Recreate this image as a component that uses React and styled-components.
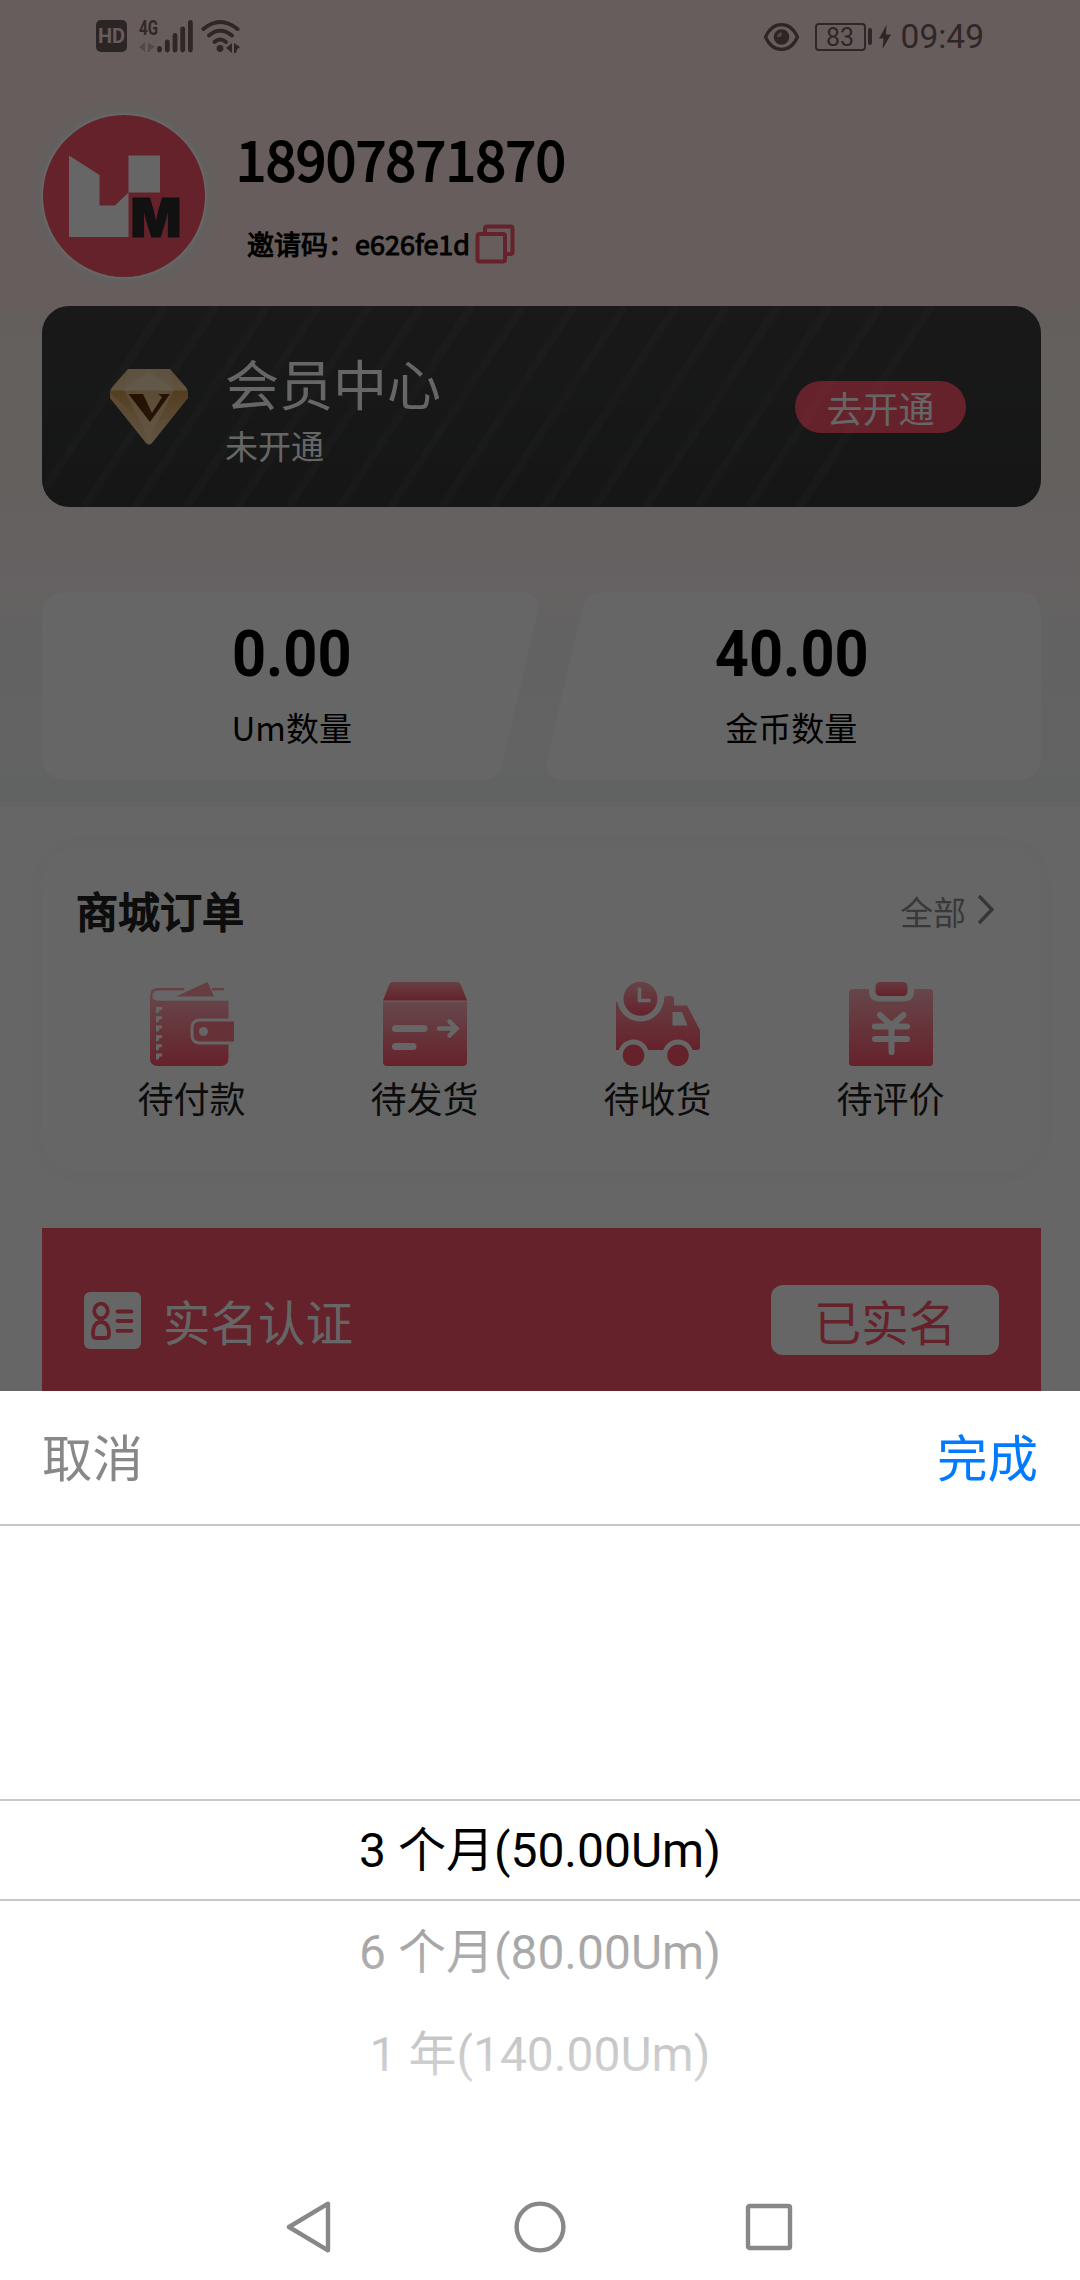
import styled, { createGlobalStyle } from "styled-components";

const RED = "#ff556c";

const orders = [
  { label: "待付款", Icon: WalletIcon },
  { label: "待发货", Icon: BoxIcon },
  { label: "待收货", Icon: TruckIcon },
  { label: "待评价", Icon: ClipboardIcon },
];

const stats = [
  { value: "0.00", label: "Um数量" },
  { value: "40.00", label: "金币数量" },
];

const periods = ["3 个月(50.00Um)", "6 个月(80.00Um)", "1 年(140.00Um)"];

const App = () => {
  return (
    <Screen>
      <GlobalStyle />
      <StatusBar />
      <Profile>
        <Avatar>
          <LogoIcon />
        </Avatar>
        <ProfileText>
          <Phone>18907871870</Phone>
          <Invite>
            <span>邀请码：e626fe1d</span>
            <CopyIcon />
          </Invite>
        </ProfileText>
      </Profile>

      <VipCard>
        <VipStripes />
        <DiamondIcon />
        <VipText>
          <VipTitle>会员中心</VipTitle>
          <VipState>未开通</VipState>
        </VipText>
        <VipButton>去开通</VipButton>
      </VipCard>

      <Stats>
        <StatsShape />
        {stats.map(({ value, label }) => (
          <Stat key={label}>
            <StatValue>{value}</StatValue>
            <StatLabel>{label}</StatLabel>
          </Stat>
        ))}
      </Stats>

      <OrdersWrap>
        <Orders>
          <OrdersHead>
            <OrdersTitle>商城订单</OrdersTitle>
            <OrdersAll>
              <span>全部</span>
              <svg width="20" height="32" viewBox="0 0 20 32">
                <path
                  d="M3 3L16 16.5L3 30"
                  fill="none"
                  stroke="#888"
                  strokeWidth="3.4"
                />
              </svg>
            </OrdersAll>
          </OrdersHead>
          <OrdersGrid>
            {orders.map(({ label, Icon }) => (
              <Order key={label}>
                <Icon />
                <span>{label}</span>
              </Order>
            ))}
          </OrdersGrid>
        </Orders>

        <Verify>
          <IdIcon />
          <VerifyTitle>实名认证</VerifyTitle>
          <VerifyBadge>已实名</VerifyBadge>
        </Verify>
      </OrdersWrap>

      <Mask />
      <Sheet>
        <SheetHead>
          <SheetAction $color="#888888">取消</SheetAction>
          <SheetAction $color="#007aff">完成</SheetAction>
        </SheetHead>
        <Picker>
          <PickerIndicator />
          {periods.map((period) => (
            <PickerItem key={period}>{period}</PickerItem>
          ))}
          <PickerFade />
        </Picker>
        <NavBar />
      </Sheet>
    </Screen>
  );
};

export default App;

function StatusBar() {
  return (
    <StatusRow>
      <HdBadge>HD</HdBadge>
      <Signal width="54" height="36" viewBox="0 0 54 36">
        <text
          x="0"
          y="17"
          fontSize="21"
          fontWeight="700"
          fontFamily="Roboto, sans-serif"
          textLength="19"
          lengthAdjust="spacingAndGlyphs"
          fill="#7a6664"
        >
          4G
        </text>
        <path d="M0 29L6 24V34zM9 24L16 29L11 32V34H9z" fill="#cbb9b7" />
        <g stroke="#746260" strokeWidth="4.8" strokeLinecap="round">
          <path d="M20.5 30.5V32M28.3 24V32M36 17.5V32M43.7 11V32M51.4 4.4V32" />
        </g>
      </Signal>
      <Wifi width="40" height="36" viewBox="0 0 40 36">
        <g
          fill="none"
          stroke="#746260"
          strokeWidth="4"
          strokeLinecap="round"
        >
          <path d="M2.5 11Q19 -3 36.5 11" />
          <path d="M8 17.5Q19 8 31 17.5" />
          <path d="M13.5 24Q19 19 25 24" />
        </g>
        <circle cx="19" cy="30.5" r="3.4" fill="#746260" />
        <path
          d="M25 30L31 25V35zM33 25L39 29L36 31.5L35 35H33z"
          fill="#746260"
        />
      </Wifi>
      <StatusRight>
        <svg width="37" height="30" viewBox="0 0 37 30">
          <path
            d="M2.5 15C10 -1.500 27 -1.500 34.500 15C27 31.500 10 31.500 2.500 15z"
            fill="none"
            stroke="#705f5d"
            strokeWidth="3.2"
          />
          <circle cx="18.500" cy="15" r="7.800" fill="#705f5d" />
          <path
            d="M14 15Q14.500 10.500 19 10.500L18 14.500z"
            fill="#fde8e5"
            opacity="0.7"
          />
        </svg>
        <Battery>83</Battery>
        <BatteryNub />
        <Bolt width="12" height="24" viewBox="0 0 12 24">
          <path d="M7.500 0L0 13.500H4.500L3.500 24L12 9.500H7z" fill="#705f5d" />
        </Bolt>
        <Clock>09:49</Clock>
      </StatusRight>
    </StatusRow>
  );
}

function LogoIcon() {
  return (
    <svg width="158" height="158" viewBox="0 0 158 158">
      <path
        d="M24 38.500L54.500 58V88.500H70L83.500 75.500V120H24z"
        fill="#fff"
      />
      <rect x="83.500" y="38.500" width="31.500" height="37" fill="#fff" />
      <text
        x="85.500"
        y="120"
        fontSize="53.500"
        fontWeight="900"
        fontFamily="Inter, sans-serif"
        textLength="51"
        lengthAdjust="spacingAndGlyphs"
        fill="#2b2b2b"
        stroke="#2b2b2b"
        strokeWidth="1"
      >
        M
      </text>
    </svg>
  );
}

function CopyIcon() {
  return (
    <svg width="40" height="40" viewBox="0 0 40 40">
      <g fill="none" stroke={RED} strokeWidth="4" strokeLinejoin="round">
        <path d="M10 8V4.500Q10 2.500 12 2.500H35.500Q37.500 2.500 37.500 4.500V28Q37.500 30 35.500 30H32" />
        <rect x="2.500" y="10" width="27.500" height="27.500" rx="2" />
      </g>
    </svg>
  );
}

function VipStripes() {
  const tops = Array.from({ length: 16 }, (_, i) => 123 + i * 51.1);
  return (
    <StripesSvg width="999" height="201" viewBox="0 0 999 201">
      {tops.map((x) => (
        <path
          key={x}
          d={`M${x} 0L${x - 132} 201`}
          stroke="#fff"
          strokeOpacity="0.04"
          strokeWidth="8"
        />
      ))}
    </StripesSvg>
  );
}

function DiamondIcon() {
  return (
    <svg width="78" height="76" viewBox="0 0 78 76">
      <defs>
        <linearGradient id="gem" x1="0" y1="0" x2="0" y2="1">
          <stop offset="0" stopColor="#e3bd84" />
          <stop offset="0.28" stopColor="#f0d0a2" />
          <stop offset="0.29" stopColor="#d29a50" />
          <stop offset="1" stopColor="#f5d6ae" />
        </linearGradient>
      </defs>
      <path
        d="M18 0H60L74 16Q78 20 78 24V29L42 74Q39 77 36 74L0 29V24Q0 20 4 16z"
        fill="url(#gem)"
      />
      <path d="M18 0H60L64 21H14z" fill="#f2d9b6" opacity="0.45" />
      <path d="M39 2L64 21H14z" fill="#fff3dc" opacity="0.35" />
      <path d="M14 21H64L39 70z" fill="#f7dcb4" opacity="0.5" />
      <path d="M0 24L18 40L39 76L0 29z" fill="#e9c189" opacity="0.7" />
      <path d="M18.500 25H33L42 44L52 28L48 25H60L40 53z" fill="#5c2d0a" />
    </svg>
  );
}

// two slanted cards sharing one backdrop
function StatsShape() {
  return (
    <StatsSvg width="999" height="188" viewBox="0 0 999 188">
      <path
        d="M26 0H478Q500 0 495 22L461 170Q456 188 438 188H26Q0 188 0 162V26Q0 0 26 0z"
        fill="#fff"
      />
      <path
        d="M562 0H973Q999 0 999 26V162Q999 188 973 188H524Q500 188 506 164L540 18Q545 0 562 0z"
        fill="#fff"
      />
    </StatsSvg>
  );
}

function RedFade({ id, from = "#ff9faa" }) {
  return (
    <linearGradient id={id} x1="0" y1="0" x2="0" y2="1">
      <stop offset="0" stopColor={from} />
      <stop offset="1" stopColor={RED} />
    </linearGradient>
  );
}

function WalletIcon() {
  return (
    <OrderSvg viewBox="0 0 84 84">
      <defs>
        <RedFade id="wallet" from="#ffb0b9" />
      </defs>
      <path
        d="M1.300 20V14Q1.300 7.300 8 7.300H34M62 7.300H74"
        fill="none"
        stroke="#ffa0ab"
        strokeWidth="2.400"
      />
      <path
        d="M26 14.500L57.500 0L64 14.500z"
        fill="#ff98a4"
      />
      <path
        d="M0 13Q3 18.700 9 18.700H78.500V76Q78.500 84 70.500 84H8Q0 84 0 76z"
        fill="url(#wallet)"
      />
      <path
        d="M84 38H50Q42 38 42 46V53Q42 61 50 61H84"
        fill="#ff7d8d"
        stroke="#fff"
        strokeWidth="3"
      />
      <circle cx="53.500" cy="49.500" r="4.500" fill="#fff" />
      {[25, 34.3, 43.6, 52.9, 62.2, 71.5].map((y) => (
        <path key={y} d={`M6 ${y}h6v3h-2.500l-1 3h-2.500z`} fill="#fff" />
      ))}
    </OrderSvg>
  );
}

function BoxIcon() {
  return (
    <OrderSvg viewBox="0 0 84 84">
      <defs>
        <RedFade id="boxLid" />
        <RedFade id="boxBody" from="#ffb4bc" />
      </defs>
      <path
        d="M10 0H74Q77 0 78 3L84 18.500H0L6 3Q7 0 10 0z"
        fill="url(#boxLid)"
      />
      <path d="M0 19.500H84V80Q84 84 80 84H4Q0 84 0 80z" fill="url(#boxBody)" />
      <g stroke="#fff" strokeLinecap="round" fill="none">
        <path d="M12.500 46.500H41M12.500 64.500H30" strokeWidth="7" />
        <path
          d="M56 46.500H73M66.500 39.500L73.500 46.500L66.500 53.500"
          strokeWidth="4.500"
        />
      </g>
    </OrderSvg>
  );
}

function TruckIcon() {
  return (
    <OrderSvg viewBox="0 0 84 84">
      <defs>
        <RedFade id="truck" />
        <RedFade id="clock" from="#ffabb5" />
      </defs>
      <path
        d="M0 20H48V17Q48 14 51 14H55Q58 14 58 17V23.500H71L84 48V65Q84 68 81 68H0z"
        fill="url(#truck)"
      />
      <circle cx="24.500" cy="16" r="23.500" fill="#fff" />
      <circle cx="24.500" cy="16.800" r="17" fill="url(#clock)" />
      <path
        d="M23.500 5.500V18.500H34.500"
        fill="none"
        stroke="#fff"
        strokeWidth="3.600"
      />
      <path d="M56.500 30H66L71.500 43.500H56.500z" fill="#fff" />
      <circle cx="17.500" cy="73" r="15.500" fill="#fff" />
      <circle cx="62" cy="73" r="15.500" fill="#fff" />
      <circle cx="17.500" cy="73.300" r="10.800" fill={RED} />
      <circle cx="62" cy="73.300" r="10.800" fill={RED} />
    </OrderSvg>
  );
}

function ClipboardIcon() {
  return (
    <OrderSvg viewBox="0 0 84 84">
      <defs>
        <RedFade id="board" from="#ffb0b9" />
        <RedFade id="clip" from="#ff8e9b" />
      </defs>
      <rect y="7" width="84" height="77" rx="3.500" fill="url(#board)" />
      <path d="M20 6H65V9Q65 19.500 54.500 19.500H31Q20 19.500 20 9z" fill="#fff" />
      <rect x="26.500" width="32" height="14" rx="4.500" fill="url(#clip)" />
      <path
        d="M31 33L42.500 43.500L54.500 33M26 44.500H58M26 57H58M42.500 44V70"
        fill="none"
        stroke="#fff"
        strokeWidth="6"
        strokeLinecap="round"
      />
    </OrderSvg>
  );
}

function IdIcon() {
  return (
    <svg width="57" height="57" viewBox="0 0 57 57">
      <rect width="57" height="57" rx="6" fill="#fff" />
      <g
        fill="none"
        stroke={RED}
        strokeWidth="3.800"
        strokeLinecap="round"
        strokeLinejoin="round"
      >
        <ellipse cx="17" cy="19" rx="6.800" ry="7.300" />
        <path d="M9 42Q9 30 17 30Q25 30 25 42Q25 46 22 46H12Q9 46 9 42z" />
        <path d="M33.500 19.500H47.500M33.500 29H47.500M33.500 38.800H47.500" />
      </g>
    </svg>
  );
}

function NavBar() {
  return (
    <NavRow>
      <svg width="52" height="52" viewBox="0 0 52 52">
        <path d="M43 2.700V49.300L4 26z" />
      </svg>
      <svg width="52" height="52" viewBox="0 0 52 52">
        <circle cx="26" cy="26" r="23.400" />
      </svg>
      <svg width="52" height="52" viewBox="0 0 52 52">
        <rect x="5" y="5" width="42" height="42" rx="1.500" />
      </svg>
    </NavRow>
  );
}

const GlobalStyle = createGlobalStyle`
  * {
    box-sizing: border-box;
  }

  body {
    margin: 0;
    background: #ffffff;
    font-family: "Noto Sans CJK SC", "Noto Sans", sans-serif;
  }

  svg {
    display: block;
    flex-shrink: 0;
  }
`;

const Screen = styled.div`
  position: relative;
  width: 1080px;
  height: 2280px;
  overflow: hidden;
  background: linear-gradient(
      #ffe8e5 0,
      #ffe8e5 300px,
      #f7efe9 335px,
      #f7f0ea 490px,
      #fcf2f2 515px,
      #fef4f5 595px,
      #f8f6f4 620px,
      #f6f7f5 770px,
      #f0f8f5 782px,
      #f0f8f5 797px,
      #f6f7f6 807px
    )
    0 0 / 100% 807px no-repeat #ffffff;
`;

const StatusRow = styled.div`
  display: flex;
  align-items: center;
  height: 72px;
  padding: 0 96px;
`;

const HdBadge = styled.div`
  width: 31px;
  height: 32px;
  margin-right: 12px;
  border-radius: 5px;
  background: #6b5f5c;
  color: #ffe8e5;
  font: 700 20px/32px Roboto, sans-serif;
  text-align: center;
`;

const Signal = styled.svg`
  overflow: visible;
`;

const Wifi = styled.svg`
  margin-left: 8px;
`;

const StatusRight = styled.div`
  display: flex;
  align-items: center;
  margin-left: auto;
  padding-top: 1px;
  color: #756361;
`;

const Battery = styled.div`
  width: 51px;
  height: 28px;
  margin-left: 15px;
  border: 2px solid #756361;
  border-radius: 4px;
  font: 400 25px/25px Roboto, sans-serif;
  text-align: center;
`;

const BatteryNub = styled.div`
  width: 4px;
  height: 17px;
  margin-left: 2px;
  border-radius: 2px;
  background: #756361;
`;

const Bolt = styled.svg`
  margin-left: 7px;
`;

const Clock = styled.div`
  margin-left: 10px;
  font: 400 33.5px/40px Roboto, sans-serif;
`;

const Profile = styled.div`
  display: flex;
  height: 234px;
  padding: 43px 43px 0;
`;

const Avatar = styled.div`
  width: 162px;
  height: 162px;
  padding: 2px;
  border-radius: 50%;
  background: ${RED};
  box-shadow: 0 0 0 2px #ffffff, 0 0 20px 8px rgba(240, 248, 245, 0.7);
`;

const ProfileText = styled.div`
  margin-left: 31px;
`;

const Phone = styled.div`
  margin-top: 3px;
  color: #000000;
  font-size: 54px;
  line-height: 80px;
  -webkit-text-stroke: 2px #000000;
`;

const Invite = styled.div`
  display: flex;
  align-items: center;
  height: 40px;
  margin: 26px 0 0 11px;
  font-size: 27px;
  -webkit-text-stroke: 1px #000000;

  span {
    margin-top: -1px;
  }

  svg {
    margin-left: 5px;
  }
`;

const VipCard = styled.div`
  position: relative;
  display: flex;
  align-items: center;
  width: 999px;
  height: 201px;
  margin-left: 42px;
  padding: 0 75px 0 68px;
  overflow: hidden;
  border-radius: 27px;
  background: linear-gradient(#3f3f3f, #373838);
`;

const StripesSvg = styled.svg`
  position: absolute;
  inset: 0;
`;

const VipText = styled.div`
  margin-left: 37px;
  padding-top: 12px;
  color: #ffffff;
`;

const VipTitle = styled.div`
  font-size: 54px;
  line-height: 64px;
`;

const VipState = styled.div`
  font-size: 33px;
  line-height: 60px;
`;

const VipButton = styled.div`
  width: 171px;
  height: 52px;
  margin-left: auto;
  border-radius: 26px;
  background: ${RED};
  color: #ffffff;
  font-size: 36px;
  line-height: 52px;
  text-align: center;
`;

const Stats = styled.div`
  position: relative;
  display: grid;
  grid-template-columns: 1fr 1fr;
  width: 999px;
  height: 188px;
  margin: 85px 0 0 42px;
`;

const StatsSvg = styled.svg`
  position: absolute;
  inset: 0;
`;

const Stat = styled.div`
  position: relative;
  padding-top: 29px;
  text-align: center;
`;

const StatValue = styled.div`
  font: 700 64px/68px Roboto, sans-serif;
  transform: scaleX(0.93);
`;

const StatLabel = styled.div`
  margin-top: 13px;
  font-size: 33px;
  line-height: 50px;
`;

const OrdersWrap = styled.div`
  padding: 67px 39px 0 42px;
`;

const Orders = styled.div`
  height: 325px;
  padding: 0 34px 0 33px;
  border-radius: 36px;
  background: #ffffff;
  box-shadow: 0 0 24px 6px rgba(0, 0, 0, 0.025);
`;

const OrdersHead = styled.div`
  display: flex;
  align-items: center;
  justify-content: space-between;
  height: 124px;
  padding: 0 11px 0 1px;
`;

const OrdersTitle = styled.div`
  color: #222222;
  font-size: 42px;
  -webkit-text-stroke: 1.8px #222222;
`;

const OrdersAll = styled.div`
  display: flex;
  align-items: center;
  gap: 10px;
  color: #909090;
  font-size: 33px;

  span {
    padding-top: 3px;
  }
`;

const OrdersGrid = styled.div`
  display: grid;
  grid-template-columns: repeat(4, 233px);
`;

const Order = styled.div`
  display: flex;
  flex-direction: column;
  align-items: center;
  padding-top: 11px;
  color: #1e1e1e;
  font-size: 36px;
  line-height: 63px;
`;

const OrderSvg = styled.svg`
  width: 84px;
  height: 84px;
  overflow: visible;
`;

const Verify = styled.div`
  display: flex;
  align-items: center;
  height: 184px;
  margin-top: 56px;
  padding: 0 42px;
  background: ${RED};
`;

const VerifyTitle = styled.div`
  margin-left: 22px;
  color: #ffffff;
  font-size: 47.5px;
`;

const VerifyBadge = styled.div`
  width: 228px;
  height: 70px;
  margin-left: auto;
  border-radius: 12px;
  background: #ffffff;
  color: ${RED};
  font-size: 47.5px;
  line-height: 71px;
  text-align: center;
`;

const Mask = styled.div`
  position: absolute;
  inset: 0;
  background: rgba(0, 0, 0, 0.6);
`;

const Sheet = styled.div`
  position: absolute;
  right: 0;
  bottom: 0;
  left: 0;
  height: 889px;
  background: #ffffff;
`;

const SheetHead = styled.div`
  display: flex;
  align-items: center;
  justify-content: space-between;
  height: 135px;
  padding: 0 42px 5px;
  border-bottom: 2px solid #c8c8c9;
`;

const SheetAction = styled.div`
  color: ${({ $color }) => $color};
  font-size: 50.5px;
`;

const Picker = styled.div`
  position: relative;
  height: 648px;
  padding-top: 274px;
`;

const PickerIndicator = styled.div`
  position: absolute;
  top: 273px;
  right: 0;
  left: 0;
  height: 102px;
  border: solid #c8c8c9;
  border-width: 2px 0;
`;

const PickerItem = styled.div`
  height: 102px;
  color: #000000;
  font: 400 48px/102px Roboto, "Noto Sans CJK SC", sans-serif;
  text-align: center;
`;

// whitens the rows below the selected one
const PickerFade = styled.div`
  position: absolute;
  top: 375px;
  right: 0;
  bottom: 0;
  left: 0;
  background: linear-gradient(
    rgba(255, 255, 255, 0.6),
    rgba(255, 255, 255, 0.95)
  );
`;

const NavRow = styled.div`
  display: flex;
  gap: 177px;
  justify-content: center;
  padding-top: 27px;

  svg {
    fill: none;
    stroke: #888888;
    stroke-width: 4.4px;
    stroke-linejoin: round;
  }
`;
